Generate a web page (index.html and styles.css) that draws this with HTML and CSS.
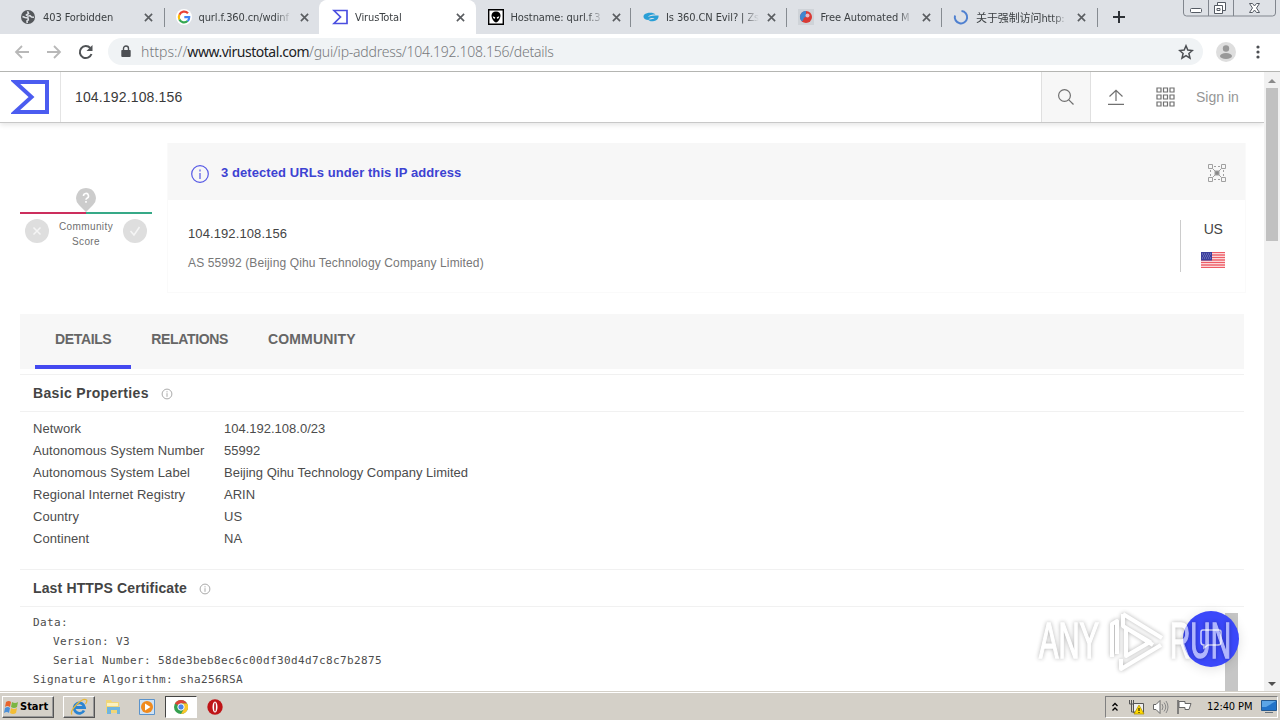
FILE: index.html
```html
<!DOCTYPE html>
<html lang="en">
<head>
    <meta charset="UTF-8">
    <meta name="viewport" content="width=device-width, initial-scale=1.0">
    <title>VirusTotal</title>
    <link rel="stylesheet" href="styles.css">
</head>
<body>
    <!-- Browser tabs -->
    <div class="tab-strip">
        <div class="tab">
            <svg class="favicon" viewBox="0 0 16 16"><circle cx="8" cy="8" r="7" fill="#54575b"/><path d="M2.500 7.500l2.500 1 3 .5.3 1.800-1.300 1 .2 2.200M7.500 2.200l1 2.300-2 1.500 1.500 1.200 2-.6 1.500 1.400 2.500.2" fill="none" stroke="#dee1e6" stroke-width="1.600"/></svg>
            <span class="tab-title">403 Forbidden</span>
            <svg class="close" viewBox="0 0 10 10"><path d="M1 1l8 8M9 1l-8 8"/></svg>
        </div>
        <div class="tab">
            <svg class="favicon" viewBox="0 0 16 16"><circle cx="8" cy="8" r="8" fill="#fff"/><g fill="none" stroke-width="2.200"><path d="M12 4.300A5.200 5.200 0 0 0 3.400 5.700" stroke="#ea4335"/><path d="M3.400 5.700a5.200 5.200 0 0 0 0 4.800" stroke="#fbbc05"/><path d="M3.400 10.500a5.200 5.200 0 0 0 8.200 1.500" stroke="#34a853"/><path d="M11.600 12A5.200 5.200 0 0 0 13.200 8.200H8.300" stroke="#4285f4"/></g></svg>
            <span class="tab-title">qurl.f.360.cn/wdinf</span>
            <svg class="close" viewBox="0 0 10 10"><path d="M1 1l8 8M9 1l-8 8"/></svg>
        </div>
        <div class="tab active">
            <svg class="favicon" viewBox="0 0 16 16"><path d="M2 1.500h13v13H2L8.500 8z" fill="none" stroke="#4b4fe0" stroke-width="1.700"/></svg>
            <span class="tab-title">VirusTotal</span>
            <svg class="close" viewBox="0 0 10 10"><path d="M1 1l8 8M9 1l-8 8"/></svg>
        </div>
        <div class="tab shifted">
            <svg class="favicon" viewBox="0 0 16 16"><path d="M.7.700h14.600v14.600H.7z" fill="#fff" stroke="#000" stroke-width="1.400"/><path d="M8 2.500c-3 0-4.500 1.800-4.500 4.200S6 13.500 8 13.500s4.500-4.400 4.500-6.800S11 2.500 8 2.500z"/><path d="M4.800 7.200l2.400 1-.2 1.500C5.500 9.500 4.800 8.500 4.800 7.200zM11.200 7.200l-2.400 1 .2 1.500c1.500-.2 2.200-1.200 2.200-2.500z" fill="#fff"/></svg>
            <span class="tab-title">Hostname: qurl.f.3</span>
            <svg class="close" viewBox="0 0 10 10"><path d="M1 1l8 8M9 1l-8 8"/></svg>
        </div>
        <div class="tab shifted">
            <svg class="favicon" viewBox="0 0 16 16"><path d="M4.500 11C-.5 10.500-1 5 4 4.200c3-.7 7-.5 8.500 1.300-3.500 0-6.500.5-7.500 2.500 2.500-1.500 6-1.300 10.500-1.500C16 9.500 13.500 12 10 12.300c-3 .2-5-1-5.500-2.300 2 .8 5 .6 7-1-3-.3-5.500.2-7 2z" fill="#2a9fd6"/></svg>
            <span class="tab-title">Is 360.CN Evil? | Zs</span>
            <svg class="close" viewBox="0 0 10 10"><path d="M1 1l8 8M9 1l-8 8"/></svg>
        </div>
        <div class="tab">
            <svg class="favicon" viewBox="0 0 16 16"><path fill="#cfd3d8" d="M0 0h16v16H0z"/><circle cx="8" cy="8" r="6" fill="#d93a35"/><path d="M8 2a6 6 0 0 0-4 10.500C6 11 5 8 8 8z" fill="#3f87cf"/><circle cx="9.500" cy="6.500" r="2" fill="#eab9c0"/></svg>
            <span class="tab-title">Free Automated M</span>
            <svg class="close" viewBox="0 0 10 10"><path d="M1 1l8 8M9 1l-8 8"/></svg>
        </div>
        <div class="tab">
            <svg class="favicon" viewBox="0 0 16 16"><path d="M8.500 2A6.200 6.200 0 1 1 2 6.500" fill="none" stroke="#4f80d0" stroke-width="2"/></svg>
            <span class="tab-title">关于强制访问http:</span>
            <svg class="close" viewBox="0 0 10 10"><path d="M1 1l8 8M9 1l-8 8"/></svg>
        </div>
        <svg class="new-tab" viewBox="0 0 12 12"><path d="M6 0v12M0 6h12" stroke="#2d3136" stroke-width="2"/></svg>
        <svg class="window-controls" viewBox="0 0 94 17" fill="none" stroke="#81868e"><path d="M.5 0v13q0 3 3 3h86q3 0 3-3V0M25.500 0v16M50.500 0v16"/><rect x="7.500" y="8.500" width="11" height="4" rx="1" fill="#fff" stroke="#555b64"/><path d="M34.500 2.500h8v8h-8z" fill="#fff" stroke="#555b64"/><path d="M31.500 5.500h8v8h-8z" fill="#fff" stroke="#555b64"/><path d="M34 8.500h3v2h-3z" stroke="#555b64"/><path d="M66.500 3.500h3l2 2.500 2-2.500h3l-3 4.500 3 4.500h-3l-2-2.500-2 2.500h-3l3-4.500z" fill="#fff" stroke="#555b64"/></svg>
    </div>

    <!-- Address bar -->
    <div class="toolbar">
        <svg class="nav" viewBox="0 0 16 16"><path d="M15 8H2M8 2L2 8l6 6" stroke="#b8b8b8"/></svg>
        <svg class="nav" viewBox="0 0 16 16"><path d="M1 8h13M8 2l6 6-6 6" stroke="#b8b8b8"/></svg>
        <svg class="nav" viewBox="0 0 16 16"><path d="M13.500 10A6 6 0 1 1 12.300 4" stroke="#505356" stroke-width="2"/><path d="M14.500 1v6h-6z" fill="#505356" stroke="none"/></svg>
        <div class="omnibox">
            <svg class="lock" viewBox="0 0 10 13"><path d="M1 5h8q.7 0 .7.7V11q0 1-1 1H1.300q-1 0-1-1V5.700Q.3 5 1 5z" fill="#4c4f53"/><path d="M2.500 5V3.500a2.500 2.500 0 0 1 5 0V5" fill="none" stroke="#4c4f53" stroke-width="1.400"/></svg>
            <span class="url"><span class="scheme">https://</span><b>www.virustotal.com</b>/gui/ip-address/104.192.108.156/details</span>
            <svg class="star" viewBox="0 0 16 16"><path d="M8 1.800l1.800 4.300 4.600.4-3.500 3 1.100 4.600L8 11.700l-4 2.400 1.100-4.600-3.500-3 4.600-.4z" fill="none" stroke="#4c4f53" stroke-width="1.500"/></svg>
        </div>
        <svg class="profile" viewBox="0 0 20 20"><circle cx="10" cy="10" r="10" fill="#dedede"/><circle cx="10" cy="6.500" r="3.200" fill="#999"/><ellipse cx="10" cy="14" rx="6" ry="3" fill="#999"/></svg>
        <svg class="kebab" viewBox="0 0 4 14"><circle cx="2" cy="2" r="1.600"/><circle cx="2" cy="7" r="1.600"/><circle cx="2" cy="12" r="1.600"/></svg>
    </div>

    <div class="viewport">
        <div class="page">
            <header class="header">
                <div class="logo">
                    <svg viewBox="0 0 38 34"><path d="M4 2h32v30H4l16.500-15z" fill="none" stroke="#4b5cf0" stroke-width="4"/></svg>
                </div>
                <div class="query">104.192.108.156</div>
                <div class="search">
                    <svg viewBox="0 0 16 16"><circle cx="6.500" cy="6.500" r="5.900"/><path d="M10.800 10.800l4.700 4.700"/></svg>
                </div>
                <div class="actions">
                    <svg class="upload" viewBox="0 0 16 16"><path d="M8 12V1.500M1.500 7.500L8 1.300l6.500 6.200M0 15.400h16"/></svg>
                    <svg class="apps" viewBox="0 0 19 20"><path d="M1 1h4v4H1zM7.500 1h4v4h-4zM14 1h4v4h-4zM1 8h4v4H1zM7.500 8h4v4h-4zM14 8h4v4h-4zM1 15h4v4H1zM7.500 15h4v4h-4zM14 15h4v4h-4z"/></svg>
                    <span class="sign-in">Sign in</span>
                </div>
            </header>

            <main class="content">
                <section class="summary">
                    <div class="score">
                        <svg class="pin" viewBox="0 0 20 24"><path d="M10 0a10 10 0 0 1 7 17l-7 7-7-7A10 10 0 0 1 10 0z" fill="#ccc"/><path d="M7.500 8a2.500 2.500 0 1 1 3.500 2.200q-1 .5-1 1.600M10 13v1.800" fill="none" stroke="#fff" stroke-width="1.600"/></svg>
                        <div class="score-line"></div>
                        <div class="votes">
                            <svg viewBox="0 0 24 24"><circle cx="12" cy="12" r="12" fill="#dedede"/><path d="M8.500 8.500l7 7m0-7l-7 7"/></svg>
                            <span>Community<br>Score</span>
                            <svg viewBox="0 0 24 24"><circle cx="12" cy="12" r="12" fill="#dedede"/><path d="M7.500 12l3.500 4 5.500-8"/></svg>
                        </div>
                    </div>
                    <div class="card">
                        <div class="card-head">
                            <svg class="info" viewBox="0 0 18 18"><circle cx="9" cy="9" r="8.300"/><path d="M9 4.500v2M9 8v6"/></svg>
                            <span class="detected">3 detected URLs under this IP address</span>
                            <svg class="graph" viewBox="0 0 18 18"><path d="M.5.500h4v4h-4zM13.500.500h4v4h-4zM.5 13.500h4v4h-4zM13.500 13.500h4v4h-4z"/><path d="M6 2.500h6M6 15.500h6M2.500 6v6M15.500 6v6" stroke-dasharray="2 2"/><path d="M4.500 4.500l9 9M13.500 4.500l-9 9"/><path d="M7 7h4v4H7z" fill="#888"/></svg>
                        </div>
                        <div class="card-body">
                            <div class="ip-info">
                                <div class="ip">104.192.108.156</div>
                                <div class="as">AS 55992 (Beijing Qihu Technology Company Limited)</div>
                            </div>
                            <div class="country">
                                <span>US</span>
                                <svg viewBox="0 0 24 16"><path fill="#fff" d="M0 0h24v16H0z"/><path d="M0 .6h24M0 3h24M0 5.500h24M0 8h24M0 10.500h24M0 13h24M0 15.400h24" stroke="#ee5c66" stroke-width="1.400"/><path fill="#3c3f9c" d="M0 0h11v8.500H0z"/><path d="M1 2h9M2 4h8M1 6h9" stroke="#8a90cf" stroke-dasharray="1 1"/></svg>
                            </div>
                        </div>
                    </div>
                </section>

                <nav class="page-tabs">
                    <a class="selected">DETAILS</a>
                    <a>RELATIONS</a>
                    <a class="community">COMMUNITY</a>
                </nav>

                <section class="panel">
                    <h2>Basic Properties
                        <svg viewBox="0 0 12 12"><circle cx="6" cy="6" r="4.900"/><path d="M6 3.200v1.200M6 5.200v3.600"/></svg>
                    </h2>
                    <dl class="props">
                        <dt>Network</dt><dd>104.192.108.0/23</dd>
                        <dt>Autonomous System Number</dt><dd>55992</dd>
                        <dt>Autonomous System Label</dt><dd>Beijing Qihu Technology Company Limited</dd>
                        <dt>Regional Internet Registry</dt><dd>ARIN</dd>
                        <dt>Country</dt><dd>US</dd>
                        <dt>Continent</dt><dd>NA</dd>
                    </dl>
                </section>

                <section class="panel cert">
                    <h2>Last HTTPS Certificate
                        <svg viewBox="0 0 12 12"><circle cx="6" cy="6" r="4.900"/><path d="M6 3.200v1.200M6 5.200v3.600"/></svg>
                    </h2>
                    <div class="cert-body">
                        <div class="cert-text">
                            <p>Data:</p>
                            <p class="indent">Version: V3</p>
                            <p class="indent">Serial Number: 58de3beb8ec6c00df30d4d7c8c7b2875</p>
                            <p>Signature Algorithm: sha256RSA</p>
                        </div>
                        <div class="cert-scroll"></div>
                    </div>
                </section>
            </main>
        </div>
        <div class="scrollbar">
            <svg viewBox="0 0 8 4"><path d="M4 0l4 4H0z" fill="#8a8a8a"/></svg>
            <div class="thumb"></div>
            <svg viewBox="0 0 8 4"><path d="M0 0h8L4 4z" fill="#505050"/></svg>
        </div>

        <div class="chat">
            <svg viewBox="0 0 24 22"><path d="M4 2h16q2 0 2 2v10q0 3-3 3H9l-4 3v-3q-3 0-3-3V4q0-2 2-2z" fill="none" stroke="#d5d7ff" stroke-width="1.500"/></svg>
        </div>
        <svg class="watermark" viewBox="0 0 200 70">
            <g class="mark-text">
                <text x="3" y="51" textLength="60" lengthAdjust="spacingAndGlyphs">ANY</text>
                <text x="134" y="51" textLength="61" lengthAdjust="spacingAndGlyphs">RUN</text>
            </g>
            <path class="mark-logo" d="M76 50V17l5-3v33M87 7l39 24M87 7v12l30 19M90 22v27l24-14-24-14M85 52v10l40-24"/>
        </svg>
    </div>

    <!-- Taskbar -->
    <footer class="taskbar">
        <div class="start">
            <svg viewBox="0 0 16 16"><path d="M2 3q3-2 5 0L6 8Q3 6 1 8z" fill="#e8642c"/><path d="M8 3q3 2 6 0l-1 5q-3 2-6 0z" fill="#7bb642"/><path d="M1 9q3-2 5 0l-1 5q-2-2-5 0z" fill="#4b8fd8"/><path d="M7 9q3 2 6 0l-1 5q-3 2-6 0z" fill="#f3bd34"/></svg>
            <span>Start</span>
        </div>
        <div class="task raised">
            <svg viewBox="0 0 18 18"><path d="M14 12.500A5.200 5.200 0 1 1 14.500 9.500H5" fill="none" stroke="#2a84d2" stroke-width="2.800"/><path d="M2 16.500C-1 13 12-1 16.500 2q1 1-1 4" fill="none" stroke="#e6b73a" stroke-width="1.300"/></svg>
        </div>
        <div class="task">
            <svg viewBox="0 0 18 18"><path d="M2 2h5l1 2h7v11H2z" fill="#f0d679"/><path d="M3 5h11v3H3z" fill="#fbf1bf"/><path d="M3 9h13v7h-3v-4H7v4H3z" fill="#70b5df"/></svg>
        </div>
        <div class="task">
            <svg viewBox="0 0 18 18"><path d="M1.500 1.500h15v15h-15z" fill="#cfe2f4" stroke="#5b93cb"/><circle cx="9" cy="9" r="6" fill="#f08a1d"/><path d="M7 5.500v7L12.500 9z" fill="#fff"/></svg>
        </div>
        <div class="task pressed">
            <svg viewBox="0 0 18 18"><circle cx="9" cy="9" r="7" fill="#35a04f"/><path d="M9 9L2.900 5.500A7 7 0 0 1 15.100 5.500H9z" fill="#dc4437"/><path d="M9 5.500h6.100A7 7 0 0 1 9 16l3-5.300z" fill="#fbc629"/><circle cx="9" cy="9" r="3.200" fill="#4a86e8" stroke="#fff"/></svg>
        </div>
        <div class="task">
            <svg viewBox="0 0 18 18"><circle cx="9" cy="9" r="7.700" fill="#bf1417"/><ellipse cx="9" cy="9" rx="2.500" ry="5.500" fill="#fff"/><ellipse cx="9" cy="9" rx="1" ry="4.500" fill="#c03035"/></svg>
        </div>
        <div class="tray">
            <svg class="chevrons" viewBox="0 0 6 10"><path d="M.5 4L3 1.500 5.500 4M.5 8.500L3 6l2.500 2.500" fill="none" stroke="#000" stroke-width="1.300"/></svg>
            <svg class="net" viewBox="0 0 17 16"><path d="M5.500 4.500h10v9h-10z" fill="#eee" stroke="#555"/><path d="M1.500 1v4h4V1M3.500 1v12h4" fill="none" stroke="#555"/><path d="M11 6l5 9H6z" fill="#ffd900" stroke="#a88c00" stroke-width=".7"/><path d="M11 9v3M11 13v1" stroke="#000"/></svg>
            <svg class="vol" viewBox="0 0 17 16"><path d="M1.500 5.500H4l4-4v13l-4-4H1.500z" fill="#fff" stroke="#666"/><path d="M10 5q2 3 0 6M12 3.500q3.500 4.500 0 9M14 2q4 6 0 12" fill="none" stroke="#888"/></svg>
            <svg class="flag" viewBox="0 0 17 16"><path d="M2 1v14" stroke="#666" stroke-width="1.500"/><path d="M3 2.500h6v2h6l-2 6H9v-2H3z" fill="#fff" stroke="#666"/></svg>
            <span class="clock">12:40 PM</span>
            <svg class="desktop" viewBox="0 0 16 14"><path d="M.5.500h15v10H.5z" fill="#2273c9" stroke="#25598f"/><path d="M1 1h14L5 7H1z" fill="#5ca5e6"/><path d="M4 12.500h8" stroke="#65717d"/></svg>
        </div>
    </footer>
</body>
</html>
```
FILE: styles.css
```css
* {
    margin: 0;
    padding: 0;
    box-sizing: border-box;
}

body {
    width: 1280px;
    height: 720px;
    overflow: hidden;
    display: flex;
    flex-direction: column;
    background: #fff;
    font-family: "Liberation Sans", Arial, sans-serif;
    color: #444;
}

svg {
    display: block;
    flex: none;
}

/* Tabs */
.tab-strip {
    height: 34px;
    flex: none;
    display: flex;
    align-items: center;
    padding-left: 8px;
    background: #dee1e6;
    position: relative;
}

.tab {
    width: 155.5px;
    height: 34px;
    display: flex;
    align-items: center;
    padding-left: 12px;
    position: relative;
    font-family: "DejaVu Sans Condensed", "Noto Sans CJK SC", sans-serif;
    font-size: 11px;
    letter-spacing: -.1px;
    color: #3c4043;
}

.tab::after {
    content: "";
    position: absolute;
    right: -1px;
    top: 8px;
    width: 1px;
    height: 19px;
    background: #868b91;
}

.tab:nth-child(2)::after,
.tab.active::after {
    display: none;
}

.tab.active {
    padding-left: 13px;
    background: #fff;
    border-radius: 8px 8px 0 0;
    box-shadow: 1px 0 #fff;
}

.tab.shifted {
    padding-left: 13px;
}

.favicon {
    width: 16px;
    height: 16px;
}

.tab-title {
    width: 94px;
    margin-left: 7px;
    white-space: nowrap;
    -webkit-mask-image: linear-gradient(to right, #000 76px, transparent 93px);
    mask-image: linear-gradient(to right, #000 76px, transparent 93px);
}

.close {
    width: 9px;
    height: 9px;
    margin-left: 7px;
    stroke: #5a5d61;
    stroke-width: 1.8;
}

.new-tab {
    width: 12px;
    height: 12px;
    margin-left: 16px;
}

.window-controls {
    width: 94px;
    height: 17px;
    position: absolute;
    top: 0;
    right: 3px;
}

/* Address bar */
.toolbar {
    height: 38px;
    flex: none;
    display: flex;
    align-items: center;
    padding: 0 20px 2px 14px;
    border-bottom: 1px solid #b4b5b2;
}

.nav {
    width: 16px;
    height: 16px;
    margin-right: 16px;
    fill: none;
    stroke-width: 1.8;
}

.omnibox {
    height: 27px;
    flex: 1;
    display: flex;
    align-items: center;
    padding: 0 9px 0 13px;
    margin-left: -2px;
    border-radius: 14px;
    background: #f0f3f5;
}

.lock {
    width: 10px;
    height: 13px;
}

.url {
    flex: 1;
    margin-left: 10px;
    font-family: "Noto Sans", sans-serif;
    font-size: 14px;
    font-weight: 300;
    letter-spacing: -.23px;
    color: #77797c;
}

.scheme {
    letter-spacing: .05px;
}

.url b {
    font-weight: 400;
    letter-spacing: -.47px;
    color: #202124;
}

.star {
    width: 16px;
    height: 16px;
}

.profile {
    width: 20px;
    height: 20px;
    margin: 0 20px 0 13px;
}

.kebab {
    width: 4px;
    height: 14px;
    fill: #4c4f53;
}

/* Page */
.viewport {
    flex: 1;
    min-height: 0;
    display: flex;
    position: relative;
}

.page {
    width: 1264px;
    overflow: hidden;
}

.header {
    height: 51px;
    display: flex;
    border-bottom: 1px solid #c8c8c8;
    box-shadow: 0 2px 5px rgba(0, 0, 0, .1);
}

.logo {
    width: 61px;
    padding: 8px 0 0 11px;
    border-right: 1px solid #e4e4e4;
}

.logo svg {
    width: 38px;
    height: 34px;
}

.query {
    flex: 1;
    padding-left: 14px;
    line-height: 50px;
    font-size: 14px;
    letter-spacing: .15px;
    color: #3a3a3a;
}

.search {
    width: 50px;
    display: flex;
    align-items: center;
    justify-content: center;
    border: solid #e0e0e0;
    border-width: 0 1px;
    background: #f7f7f7;
}

.search svg {
    width: 16px;
    height: 16px;
}

.search svg,
.actions svg {
    fill: none;
    stroke: #707070;
    stroke-width: 1.2;
}

.actions {
    width: 173px;
    display: flex;
    align-items: center;
    padding-left: 17px;
}

.upload {
    width: 16px;
    height: 16px;
}

.apps {
    width: 19px;
    height: 20px;
    margin: 0 21px 0 32px;
}

.sign-in {
    font-size: 14px;
    color: #969696;
    white-space: nowrap;
}

.content {
    padding: 20px 20px 0;
}

.summary {
    display: flex;
    width: 1226px;
    height: 150px;
}

.score {
    width: 132px;
    margin-right: 15px;
    padding-top: 45px;
    display: flex;
    flex-direction: column;
    align-items: center;
}

.pin {
    width: 20px;
    height: 24px;
}

.score-line {
    width: 132px;
    height: 2px;
    background: linear-gradient(to right, #cc2e5d 50%, #36a987 50%);
}

.votes {
    width: 122px;
    display: flex;
    justify-content: space-between;
    padding-top: 5px;
    font-size: 10px;
    line-height: 15px;
    letter-spacing: .4px;
    text-align: center;
    color: #707070;
}

.votes svg {
    width: 24px;
    height: 24px;
    fill: none;
    stroke: #f5f5f5;
    stroke-width: 1.5;
}

.votes circle {
    stroke: none;
}

.card {
    flex: 1;
    border: 1px solid #fafafa;
    border-top: 0;
}

.card-head {
    height: 57px;
    display: flex;
    align-items: center;
    padding: 3px 19px 0 23px;
    background: #f7f7f7;
}

.info {
    width: 18px;
    height: 18px;
    margin-top: 2px;
    fill: none;
    stroke: #5558e5;
    stroke-width: 1.2;
}

.detected {
    flex: 1;
    margin: -2px 0 0 12px;
    font-size: 13px;
    font-weight: bold;
    letter-spacing: .08px;
    color: #3d42d2;
}

.graph {
    width: 18px;
    height: 18px;
    fill: none;
    stroke: #a0a0a0;
}

.card-body {
    display: flex;
    justify-content: space-between;
    padding: 20px 0 0 20px;
}

.ip {
    margin-top: 6px;
    line-height: 16px;
    font-size: 13px;
    letter-spacing: .1px;
    color: #444;
}

.as {
    margin-top: 13px;
    line-height: 16px;
    font-size: 12px;
    letter-spacing: .13px;
    color: #777;
}

.country {
    width: 65px;
    height: 52px;
    display: flex;
    flex-direction: column;
    align-items: center;
    border-left: 1px solid #ccc;
    font-size: 14px;
    letter-spacing: -.5px;
    line-height: 18px;
}

.country svg {
    width: 24px;
    height: 16px;
    margin-top: 14px;
}

.page-tabs {
    height: 55px;
    display: flex;
    margin-top: 21px;
    padding-left: 15px;
    background: #f7f7f7;
}

.page-tabs a {
    padding: 0 20px;
    line-height: 50px;
    font-size: 14px;
    font-weight: bold;
    letter-spacing: -.36px;
    color: #666;
}

.page-tabs .selected {
    border-bottom: 4px solid #4449f0;
}

.page-tabs .community {
    letter-spacing: .15px;
}

.panel {
    margin-top: 5px;
    padding-left: 13px;
    border-top: 1px solid #f1f1f1;
}

.panel.cert {
    margin-top: 0;
}

.panel h2 {
    height: 37px;
    display: flex;
    align-items: center;
    margin-left: -13px;
    padding-left: 13px;
    border-bottom: 1px solid #f1f1f1;
    font-size: 14px;
    letter-spacing: .33px;
    color: #444;
}

.panel.cert h2 {
    letter-spacing: .14px;
}

.panel h2 svg {
    width: 12px;
    height: 12px;
    margin: 2px 0 0 12px;
    fill: none;
    stroke: #aaa;
}

.props {
    display: grid;
    grid-template-columns: 191px 1fr;
    grid-auto-rows: 22px;
    padding: 6px 0 19px;
    line-height: 22px;
    font-size: 13px;
    color: #4c4c4c;
}

.props dt {
    letter-spacing: .07px;
}

.cert-body {
    display: flex;
    justify-content: space-between;
    padding: 6px 6px 0 0;
}

.cert-text {
    font-family: "DejaVu Sans Mono", monospace;
    font-size: 11px;
    line-height: 19px;
    letter-spacing: .38px;
    color: #4c4c4c;
}

.indent {
    padding-left: 20px;
}

.cert-scroll {
    width: 13px;
    height: 90px;
    background: #c6c6c6;
}

.scrollbar {
    width: 16px;
    display: flex;
    flex-direction: column;
    align-items: center;
    padding: 7px 0 6px;
    background: #f1f1f1;
}

.scrollbar svg {
    width: 8px;
    height: 4px;
}

.thumb {
    width: 12px;
    height: 153px;
    margin: 5px 0 auto;
    background: #c1c1c1;
}

.chat {
    width: 56px;
    height: 56px;
    position: absolute;
    left: 1183px;
    top: 539px;
    display: flex;
    align-items: center;
    justify-content: center;
    border-radius: 50%;
    background: #3b48fa;
    box-shadow: 0 2px 12px rgba(0, 0, 0, .12);
}

.chat svg {
    width: 24px;
    height: 22px;
}

.watermark {
    width: 200px;
    height: 70px;
    position: absolute;
    left: 1036px;
    top: 535px;
    filter: drop-shadow(0 0 2px rgba(0, 0, 0, .5));
    opacity: .6;
}

.mark-text {
    font-family: "Liberation Sans Narrow", "Liberation Sans", sans-serif;
    font-size: 50px;
    fill: #fff;
    stroke: #fff;
    stroke-width: 1.5;
}

.mark-logo {
    fill: none;
    stroke: #fff;
    stroke-width: 4;
    stroke-linejoin: round;
}

/* Taskbar */
.taskbar {
    height: 28px;
    flex: none;
    display: flex;
    align-items: center;
    padding: 0 2px;
    border-top: 1px solid #fff;
    box-shadow: 0 -1px #d4d0c8;
    background: #d4d0c8;
    position: relative;
    font-family: "DejaVu Sans Condensed", sans-serif;
    font-size: 11px;
    color: #000;
}

.start,
.raised {
    border: 1px solid;
    border-color: #fff #555 #555 #fff;
    box-shadow: inset -1px -1px #999;
}

.start {
    width: 52px;
    height: 22px;
    display: flex;
    align-items: center;
    padding-left: 1px;
    font-weight: bold;
}

.start svg {
    width: 16px;
    height: 16px;
}

.task {
    width: 32px;
    height: 22px;
    display: flex;
    align-items: center;
    justify-content: center;
    margin-right: 2px;
}

.start + .task {
    margin-left: 9px;
}

.task svg {
    width: 18px;
    height: 18px;
}

.pressed {
    border: 1px solid;
    border-color: #444 #fff #fff #444;
    background: #fff;
}

.tray {
    width: 173px;
    height: 22px;
    display: flex;
    align-items: center;
    margin-left: auto;
    border: 1px solid;
    border-color: #808080 #fff #fff #808080;
    padding-left: 6px;
}

.chevrons {
    width: 6px;
    height: 10px;
}

.net,
.vol,
.flag {
    width: 17px;
    height: 16px;
}

.net {
    margin-left: 10px;
}

.vol,
.flag {
    margin-left: 7px;
}

.clock {
    margin-left: 14px;
    width: 46px;
    letter-spacing: -.1px;
    white-space: nowrap;
}

.desktop {
    width: 16px;
    height: 14px;
    margin-left: auto;
}
```
